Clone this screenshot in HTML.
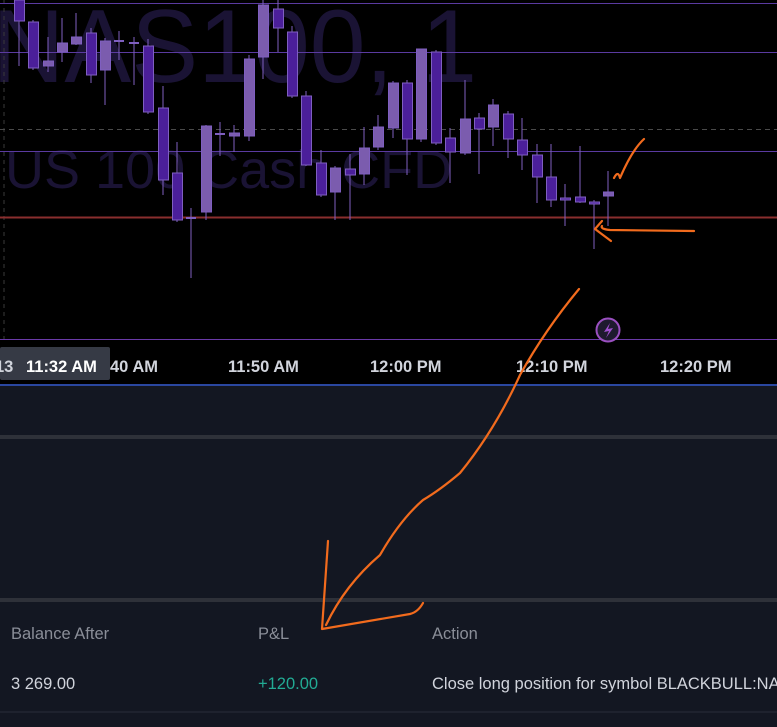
<!DOCTYPE html>
<html><head><meta charset="utf-8"><style>
html,body{margin:0;padding:0;width:777px;height:727px;overflow:hidden;background:#131722;font-family:"Liberation Sans","DejaVu Sans",sans-serif}
</style></head><body>
<svg width="777" height="727" viewBox="0 0 777 727" xmlns="http://www.w3.org/2000/svg" style="position:absolute;left:0;top:0">
<rect x="0" y="0" width="777" height="384" fill="#000"/>
<text x="-8" y="82" font-size="104" fill="#1a1334" textLength="485" lengthAdjust="spacingAndGlyphs" font-family="Liberation Sans, sans-serif">NAS100, 1</text>
<text x="5" y="188" font-size="54" fill="#1a1334" font-family="Liberation Sans, sans-serif">US 100 Cash CFD</text>
<line x1="4" y1="0" x2="4" y2="340" stroke="#3a3a3a" stroke-dasharray="4,4"/>
<line x1="0" y1="3.5" x2="777" y2="3.5" stroke="#5a3aa0"/>
<line x1="0" y1="52.5" x2="777" y2="52.5" stroke="#5a3aa0"/>
<line x1="0" y1="129.5" x2="777" y2="129.5" stroke="#4a4a4a" stroke-dasharray="5,4"/>
<line x1="0" y1="151.5" x2="777" y2="151.5" stroke="#5a3aa0"/>
<line x1="0" y1="217.5" x2="777" y2="217.5" stroke="#8a2e2e" stroke-width="2"/>
<line x1="0" y1="339.5" x2="777" y2="339.5" stroke="#6a3aa8"/>
<g stroke-width="1">
<g stroke="#7f5fc0">
<line x1="19" y1="0" x2="19" y2="66"/><rect x="14.5" y="0" width="10" height="21" fill="#4b1f9a"/>
<line x1="33" y1="20" x2="33" y2="70"/><rect x="28.5" y="22" width="10" height="46" fill="#4b1f9a"/>
<line x1="48" y1="37" x2="48" y2="72"/><rect x="43.5" y="61" width="10" height="5" fill="#7b5cae"/>
<line x1="62" y1="18" x2="62" y2="62"/><rect x="57.5" y="43" width="10" height="9" fill="#7b5cae"/>
<line x1="76" y1="13" x2="76" y2="45"/><rect x="71.5" y="37" width="10" height="7" fill="#7b5cae"/>
<line x1="91" y1="28" x2="91" y2="83"/><rect x="86.5" y="33" width="10" height="42" fill="#4b1f9a"/>
<line x1="105" y1="38" x2="105" y2="105"/><rect x="100.5" y="41" width="10" height="29" fill="#7b5cae"/>
<line x1="119" y1="31" x2="119" y2="60"/><line x1="114" y1="41" x2="124" y2="41" stroke-width="2"/>
<line x1="134" y1="37" x2="134" y2="85"/><line x1="129" y1="43" x2="139" y2="43" stroke-width="2"/>
<line x1="148" y1="39" x2="148" y2="114"/><rect x="143.5" y="46" width="10" height="66" fill="#4b1f9a"/>
<line x1="163" y1="86" x2="163" y2="195"/><rect x="158.5" y="108" width="10" height="72" fill="#4b1f9a"/>
<line x1="177" y1="142" x2="177" y2="222"/><rect x="172.5" y="173" width="10" height="47" fill="#4b1f9a"/>
<line x1="191" y1="208" x2="191" y2="278"/><line x1="186" y1="218" x2="196" y2="218" stroke-width="2"/>
<line x1="206" y1="125" x2="206" y2="220"/><rect x="201.5" y="126" width="10" height="86" fill="#7b5cae"/>
<line x1="220" y1="122" x2="220" y2="156"/><line x1="215" y1="134" x2="225" y2="134" stroke-width="2"/>
<line x1="234" y1="125" x2="234" y2="152"/><rect x="229.5" y="133" width="10" height="3" fill="#7b5cae"/>
<line x1="249" y1="55" x2="249" y2="141"/><rect x="244.5" y="59" width="10" height="77" fill="#7b5cae"/>
<line x1="263" y1="0" x2="263" y2="79"/><rect x="258.5" y="5" width="10" height="52" fill="#7b5cae"/>
<line x1="278" y1="0" x2="278" y2="52"/><rect x="273.5" y="9" width="10" height="19" fill="#4b1f9a"/>
<line x1="292" y1="26" x2="292" y2="98"/><rect x="287.5" y="32" width="10" height="64" fill="#4b1f9a"/>
<line x1="306" y1="91" x2="306" y2="166"/><rect x="301.5" y="96" width="10" height="69" fill="#4b1f9a"/>
<line x1="321" y1="150" x2="321" y2="197"/><rect x="316.5" y="163" width="10" height="32" fill="#4b1f9a"/>
<line x1="335" y1="166" x2="335" y2="220"/><rect x="330.5" y="168" width="10" height="24" fill="#7b5cae"/>
<line x1="350" y1="154" x2="350" y2="220"/><rect x="345.5" y="169" width="10" height="6" fill="#4b1f9a"/>
<line x1="364" y1="127" x2="364" y2="185"/><rect x="359.5" y="148" width="10" height="26" fill="#7b5cae"/>
<line x1="378" y1="115" x2="378" y2="150"/><rect x="373.5" y="127" width="10" height="20" fill="#7b5cae"/>
<line x1="393" y1="81" x2="393" y2="138"/><rect x="388.5" y="83" width="10" height="45" fill="#7b5cae"/>
<line x1="407" y1="80" x2="407" y2="175"/><rect x="402.5" y="83" width="10" height="56" fill="#4b1f9a"/>
<line x1="421" y1="49" x2="421" y2="142"/><rect x="416.5" y="49" width="10" height="90" fill="#7b5cae"/>
<line x1="436" y1="50" x2="436" y2="145"/><rect x="431.5" y="52" width="10" height="91" fill="#4b1f9a"/>
<line x1="450" y1="128" x2="450" y2="183"/><rect x="445.5" y="138" width="10" height="14" fill="#4b1f9a"/>
<line x1="465" y1="80" x2="465" y2="155"/><rect x="460.5" y="119" width="10" height="34" fill="#7b5cae"/>
<line x1="479" y1="113" x2="479" y2="174"/><rect x="474.5" y="118" width="10" height="11" fill="#4b1f9a"/>
<line x1="493" y1="99" x2="493" y2="146"/><rect x="488.5" y="105" width="10" height="22" fill="#7b5cae"/>
<line x1="508" y1="111" x2="508" y2="158"/><rect x="503.5" y="114" width="10" height="25" fill="#4b1f9a"/>
<line x1="522" y1="118" x2="522" y2="170"/><rect x="517.5" y="140" width="10" height="15" fill="#4b1f9a"/>
<line x1="537" y1="144" x2="537" y2="203"/><rect x="532.5" y="155" width="10" height="22" fill="#4b1f9a"/>
<line x1="551" y1="144" x2="551" y2="207"/><rect x="546.5" y="177" width="10" height="23" fill="#4b1f9a"/>
<line x1="565" y1="184" x2="565" y2="226"/><rect x="560.5" y="198" width="10" height="2" fill="#4b1f9a"/>
<line x1="580" y1="146" x2="580" y2="203"/><rect x="575.5" y="197" width="10" height="5" fill="#4b1f9a"/>
<line x1="594" y1="200" x2="594" y2="249"/><rect x="589.5" y="202" width="10" height="2" fill="#4b1f9a"/>
<line x1="608" y1="171" x2="608" y2="226"/><rect x="603.5" y="192" width="10" height="4" fill="#7b5cae"/>
</g></g>
<circle cx="608" cy="330" r="11.5" fill="#1e1a2e" stroke="#9a4fc0" stroke-width="2"/>
<path d="M610 323 L604 332 L609 331 L606 338 L613 328 L608 329 Z" fill="#a050d0"/>
<rect x="0" y="347" width="110" height="33" rx="2" fill="#363a45"/>
<g font-size="16.5" font-weight="bold" fill="#d1d4dc">
<text x="-5" y="372">13</text><text x="26" y="372" fill="#fff">11:32 AM</text>
<text x="110" y="372">40 AM</text><text x="228" y="372">11:50 AM</text><text x="370" y="372">12:00 PM</text>
<text x="516" y="372">12:10 PM</text><text x="660" y="372">12:20 PM</text>
</g>
<rect x="0" y="384" width="777" height="2" fill="#2a47a0"/>
<rect x="0" y="386" width="777" height="341" fill="#131722"/>
<rect x="0" y="435" width="777" height="4" fill="#2e3139"/>
<rect x="0" y="598" width="777" height="4" fill="#2e3139"/>
<line x1="0" y1="712" x2="777" y2="712" stroke="#2a2e39"/>
<g font-size="16.5" fill="#8a8e98"><text x="11" y="639">Balance After</text><text x="258" y="639">P&amp;L</text><text x="432" y="639">Action</text></g>
<g font-size="16.5" fill="#d1d4dc"><text x="11" y="689">3 269.00</text><text x="258" y="689" fill="#22ab94">+120.00</text><text x="432" y="689">Close long position for symbol BLACKBULL:NAS100</text></g>
<g fill="none" stroke="#f26b1d" stroke-width="2.2" stroke-linecap="round" stroke-linejoin="round">
<path d="M614 178 Q618 170 620 178 Q632 150 644 139"/>
<path d="M694 231 L610 230 Q600 229 602 226"/>
<path d="M602 221 L595 229 L611 241"/>
<path d="M579 289 Q545 330 520 375 Q495 430 460 473 Q440 490 423 500 Q400 520 380 555 Q345 585 326 625"/>
<path d="M328 541 L322 629 L410 614 Q418 612 423 603"/>
</g>
</svg>
</body></html>
